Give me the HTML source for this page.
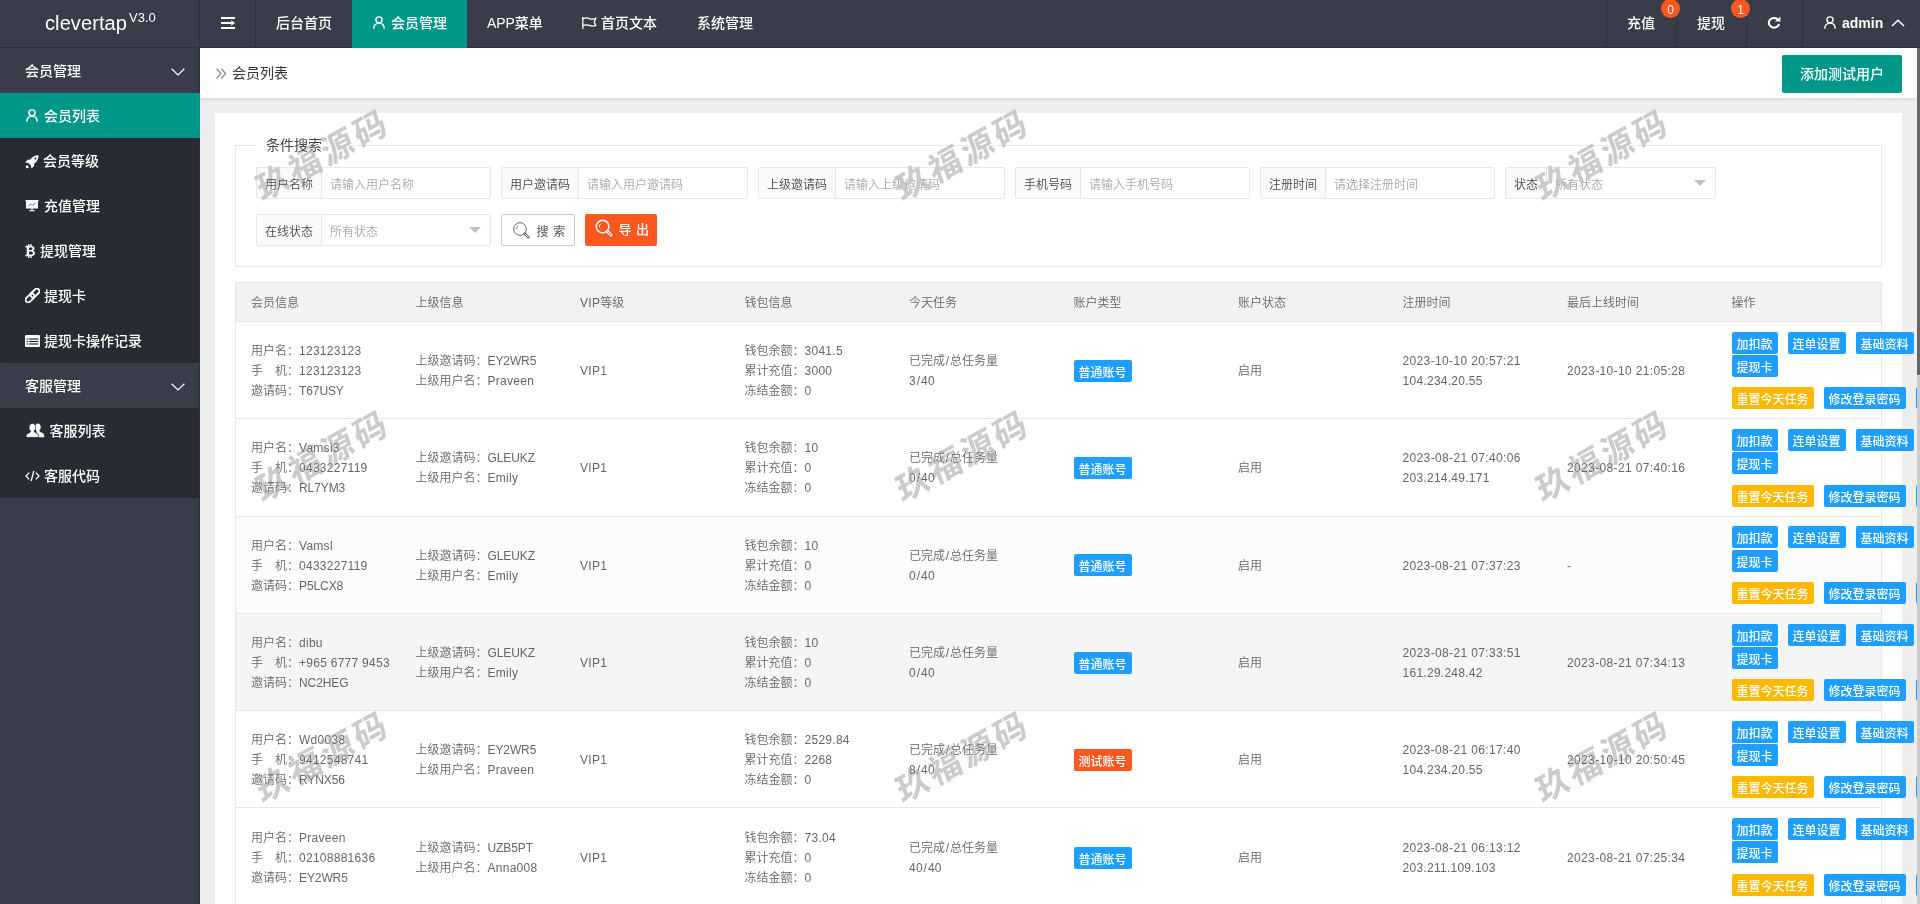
<!DOCTYPE html>
<html lang="zh-CN">
<head>
<meta charset="utf-8">
<title>clevertap</title>
<style>
*{box-sizing:border-box;margin:0;padding:0}
html,body{width:1920px;height:904px;overflow:hidden}
body{position:relative;background:#eee;font-family:"Liberation Sans","Noto Sans CJK SC",sans-serif;font-size:14px;color:#333;line-height:24px}
svg{display:block}
.l{letter-spacing:.27px}.l2{letter-spacing:.36px}.u{letter-spacing:-.1px}.sl{padding:0 .8px}.sl2{padding:0 .7px}
/* header */
.header{position:absolute;left:0;top:0;width:1920px;height:48px;background:#393D49;border-bottom:1px solid #2d303b;z-index:5}
.logo{position:absolute;left:0;top:0;width:200px;height:47px;color:#fff;font-size:20px;line-height:47px;border-right:1px solid #2d303b}
.logo b{position:absolute;left:45px;top:0px;font-weight:400;letter-spacing:.1px}
.logo sup{position:absolute;left:129px;top:-6px;font-size:13px;font-weight:400}
.nav{font-weight:500;position:absolute;top:0;height:47px;color:#fff;font-size:14px;line-height:47px;white-space:nowrap}
.nav .ni{position:absolute;top:0;height:47px}
.vline{position:absolute;top:0;width:1px;height:47px;background:#2f323e}
.badge{position:absolute;top:-1px;width:19px;height:19px;border-radius:50%;background:#FF5722;color:#fff;font-size:12px;line-height:23px;text-align:center}
/* side */
.side{position:absolute;left:0;top:48px;width:200px;height:856px;background:#393D49;border-right:1px solid #2d303b;color:#fff;z-index:4}
.side .it{font-weight:500;position:absolute;left:0;width:199px;height:45px;line-height:47px;font-size:14px;white-space:nowrap}
.side .sub{position:absolute;left:0;width:199px;background:#282B33;border-radius:2px}
.side .it span{position:absolute;top:0}
.side .it svg{position:absolute}
/* crumb */
.crumb{position:absolute;left:200px;top:48px;width:1717px;height:50px;background:#fff;box-shadow:0 1px 4px rgba(0,0,0,.12);z-index:3}
.crumb .t{position:absolute;left:32px;top:0;line-height:50px;font-size:14px;color:#333}
.addbtn{font-weight:500;position:absolute;left:1582px;top:7px;width:120px;height:38px;line-height:38px;background:#009688;color:#fff;font-size:14px;text-align:center;border-radius:2px}
/* card */
.card{position:absolute;left:215px;top:113px;width:1687px;height:900px;background:#fff}
.fs{position:absolute;left:20px;top:32px;width:1647px;height:122px;border:1px solid #e6e6e6}
.fs .lg{position:absolute;left:20px;top:-13px;padding:0 10px;background:#fff;font-size:14px;line-height:24px;color:#444}
.grp{font-weight:350;position:absolute;height:32px;border:1px solid #e6e6e6;border-radius:2px;font-size:12px;line-height:34px;background:#fff;overflow:hidden}
.grp .lb{position:absolute;left:0;top:0;height:30px;background:#fafafa;border-right:1px solid #e6e6e6;color:#4a4a4a;text-align:center}
.grp .ph{position:absolute;top:0;color:#a9a9a9}
.grp .tri{position:absolute;right:9px;top:12px;width:0;height:0;border:6px solid transparent;border-top-color:#c2c2c2}
.sbtn{position:absolute;top:68px;height:32px;border-radius:2px;font-size:12px;line-height:30px}
/* table */
.tb{font-weight:350;position:absolute;left:20px;top:169px;width:1647px;border:1px solid #e6e6e6;font-size:12px;line-height:20px;color:#666}
.th{display:flex;height:39px;background:#f2f2f2;border-bottom:1px solid #e6e6e6}
.th div{width:164.5px;padding:10px 15px 8px;white-space:nowrap}
.tr{display:flex;border-bottom:1px solid #e6e6e6;align-items:center}
.td{width:164.5px;flex:none;padding:2px 15px 0;white-space:nowrap}
.td.tg{display:flex;align-items:center;padding-top:1.5px}
.td.ops{align-self:flex-start;padding-top:9.9px;overflow:visible}
.btn{font-weight:500;display:inline-block;border-radius:2px;color:#fff;white-space:nowrap;text-align:center}
.btn.xs{height:22px;line-height:26px;padding:0 5px;font-size:12px;overflow:hidden}
.blue{background:#1E9FFF}.warm{background:#FFB800}.red{background:#FF5722}
.o1,.o2,.o3{display:flex;white-space:nowrap}
.o1{height:23.3px}.o2{height:22px}.o3{margin-top:10.2px}
.o1 .btn,.o2 .btn,.o3 .btn{flex:none;margin-right:10px}
/* watermark */
.wm{position:absolute;width:200px;height:50px;line-height:50px;text-align:center;font-size:33.5px;font-weight:700;letter-spacing:3.5px;color:#cbcbcb;mix-blend-mode:darken;transform:rotate(-29deg) skewX(-8deg);white-space:nowrap;z-index:9;font-family:"Noto Sans CJK SC",sans-serif}
/* scrollbar */
.sbar{position:absolute;left:1917px;top:48px;width:3px;height:856px;background:#ccc;z-index:10}
.sbar i{position:absolute;left:0;top:0;width:3px;height:327px;background:#666;border-bottom:0}.sbar b{position:absolute;left:0;top:327px;width:3px;height:1px;background:#ddd}
.cover{position:absolute;left:1902px;top:113px;width:15px;height:800px;z-index:2}
</style>
</head>
<body>
<!-- HEADER -->
<div class="header">
  <div class="logo"><b>clevertap</b><sup>V3.0</sup></div>
  <div class="vline" style="left:255px"></div>
  <svg style="position:absolute;left:221px;top:17px" width="14" height="12" viewBox="0 0 14 12"><g fill="#fff"><rect x="0" y="0" width="14" height="2"/><rect x="0" y="5" width="10.4" height="2"/><rect x="0" y="10" width="14" height="2"/><path d="M10.2 3.2 L14 6 L10.2 8.8z"/></g></svg>
  <div class="nav" style="left:0">
    <div class="ni" style="left:276px">后台首页</div>
    <div class="ni" style="left:352px;width:115px;height:48px;background:#009688"></div>
    <svg style="position:absolute;left:373px;top:16px" width="12" height="13" viewBox="0 0 12 14" preserveAspectRatio="none"><g fill="none" stroke="#fff" stroke-width="1.4"><circle cx="6" cy="4" r="3.1"/><path d="M.8 13.6 C.8 9.6 3 7.6 6 7.6 S11.2 9.6 11.2 13.6"/></g></svg>
    <div class="ni" style="left:391px">会员管理</div>
    <div class="ni" style="left:487px"><span style="letter-spacing:-.1px">APP</span>菜单</div>
    <svg style="position:absolute;left:582px;top:17px" width="15" height="12" viewBox="0 0 15 12"><g fill="none" stroke="#fff" stroke-width="1.3"><path d="M.8 0 V12"/><path d="M.8 1.6 C3.5 .6 5.5 .8 7.5 1.6 S11.5 2.4 13.8 1.4 L12.2 4.9 L13.8 8.4 C11.5 9.4 9.5 9.2 7.5 8.4 S3.5 7.6 .8 8.6"/></g></svg>
    <div class="ni" style="left:601px">首页文本</div>
    <div class="ni" style="left:697px">系统管理</div>
  </div>
  <div class="vline" style="left:1606px"></div>
  <div class="vline" style="left:1676px"></div>
  <div class="vline" style="left:1746px"></div>
  <div class="vline" style="left:1802px"></div>
  <div class="nav" style="left:0">
    <div class="ni" style="left:1627px">充值</div>
    <div class="ni" style="left:1697px">提现</div>
    <svg style="position:absolute;left:1767px;top:16px" width="14" height="13" viewBox="0 0 14 14" preserveAspectRatio="none"><path d="M11.2 4.2 A5.2 5.2 0 1 0 12.1 8.6" fill="none" stroke="#fff" stroke-width="2"/><path d="M13.4 0.6 V6 H8z" fill="#fff"/></svg>
    <svg style="position:absolute;left:1824px;top:16px" width="12" height="13" viewBox="0 0 12 14" preserveAspectRatio="none"><g fill="none" stroke="#fff" stroke-width="1.4"><circle cx="6" cy="4" r="3.1"/><path d="M.8 13.6 C.8 9.6 3 7.6 6 7.6 S11.2 9.6 11.2 13.6"/></g></svg>
    <div class="ni" style="left:1842px;font-size:14px;font-weight:700;top:0">admin</div>
    <svg style="position:absolute;left:1891px;top:19px" width="14" height="8" viewBox="0 0 14 8"><path d="M1 7 L7 1.2 L13 7" fill="none" stroke="#fff" stroke-width="1.5"/></svg>
  </div>
  <div class="badge" style="left:1661px">0</div>
  <div class="badge" style="left:1731px">1</div>
</div>

<!-- SIDE -->
<div class="side">
  <div class="it" style="top:0"><span style="left:25px">会员管理</span><svg style="left:171px;top:19.5px" width="14" height="8" viewBox="0 0 14 8"><path d="M.6 .7 L7 6.9 L13.4 .7" fill="none" stroke="#fff" stroke-width="1.25"/></svg></div>
  <div class="sub" style="top:45px;height:270px"></div>
  <div class="it" style="top:45px;background:#009688;width:200px"><svg style="left:26px;top:16px" width="12" height="13" viewBox="0 0 12 14" preserveAspectRatio="none"><g fill="none" stroke="#fff" stroke-width="1.4"><circle cx="6" cy="4" r="3.1"/><path d="M.8 13.6 C.8 9.6 3 7.6 6 7.6 S11.2 9.6 11.2 13.6"/></g></svg><span style="left:44px">会员列表</span></div>
  <div class="it" style="top:90px"><svg style="left:25px;top:17px" width="14" height="14" viewBox="0 0 14 14"><path fill="#fff" d="M13.6.3 C10 .2 7.2 1.8 5.3 4.6 L2.6 4.8 L.3 7.6 L3.3 7.9 L6 10.6 L6.3 13.6 L9.1 11.3 L9.3 8.6 C12.1 6.7 13.7 3.9 13.6.3z M10.4 4.6a1.1 1.1 0 1 1 0-2.2 1.1 1.1 0 0 1 0 2.2z M1.2 10.4 L3.4 10.6 L3.6 12.8 L.8 13.2z"/></svg><span style="left:43px">会员等级</span></div>
  <div class="it" style="top:135px"><svg style="left:25px;top:17px" width="14" height="12" viewBox="0 0 14 12"><path fill="#fff" d="M1 .6 H13 V8.6 H1z M.3 0 H13.7 V1.2 H.3z M6.4 8.6 H7.6 V10.4 H6.4z M4.2 10.2 H9.8 V11.2 H4.2z"/><path d="M3.2 6 L5.6 4.2 L7.4 5.2 L10.6 3" stroke="#393D49" stroke-width=".7" fill="none"/></svg><span style="left:44px">充值管理</span></div>
  <div class="it" style="top:180px"><svg style="left:25px;top:16px" width="10.5" height="14" viewBox="0 0 11 15"><path fill="#fff" d="M3.2 0 H4.6 V2 H5.6 V0 H7 V2.1 C8.9 2.3 10 3.2 10 4.8 C10 5.9 9.4 6.7 8.4 7.1 C9.8 7.5 10.6 8.4 10.6 9.8 C10.6 11.7 9.2 12.7 7 12.9 V15 H5.6 V13 H4.6 V15 H3.2 V13 H.4 V11.3 H1.8 V3.7 H.4 V2 H3.2z M4.2 3.8 V6.4 H6.2 C7.2 6.4 7.8 5.9 7.8 5.1 C7.8 4.3 7.2 3.8 6.2 3.8z M4.2 8.1 V11.2 H6.5 C7.7 11.2 8.3 10.6 8.3 9.6 C8.3 8.7 7.7 8.1 6.5 8.1z"/></svg><span style="left:40px">提现管理</span></div>
  <div class="it" style="top:225px"><svg style="left:24.5px;top:15px" width="15" height="15" viewBox="0 0 15 15"><g fill="none" stroke="#fff" stroke-width="1.9" transform="rotate(-45 7.5 7.5)"><rect x="-1.2" y="4.9" width="10.4" height="5.2" rx="2.6"/><rect x="5.8" y="4.9" width="10.4" height="5.2" rx="2.6"/></g></svg><span style="left:44px">提现卡</span></div>
  <div class="it" style="top:270px"><svg style="left:24.5px;top:17px" width="15" height="12" viewBox="0 0 15 12"><rect x="0" y="0" width="15" height="12" rx="1.2" fill="#fff"/><g fill="#282B33"><rect x="1.6" y="3.4" width="1.6" height="1.2"/><rect x="4.2" y="3.4" width="9.2" height="1.2"/><rect x="1.6" y="5.9" width="1.6" height="1.2"/><rect x="4.2" y="5.9" width="9.2" height="1.2"/><rect x="1.6" y="8.4" width="1.6" height="1.2"/><rect x="4.2" y="8.4" width="9.2" height="1.2"/></g></svg><span style="left:44px">提现卡操作记录</span></div>
  <div class="it" style="top:315px"><span style="left:25px">客服管理</span><svg style="left:171px;top:19.5px" width="14" height="8" viewBox="0 0 14 8"><path d="M.6 .7 L7 6.9 L13.4 .7" fill="none" stroke="#fff" stroke-width="1.25"/></svg></div>
  <div class="sub" style="top:360px;height:90px"></div>
  <div class="it" style="top:360px"><svg style="left:26px;top:15px" width="18.5" height="15" viewBox="0 0 18 14" preserveAspectRatio="none"><g fill="#fff"><path d="M11.5.4 C13.3.4 14.4 1.8 14.4 3.8 C14.4 5.2 13.8 6.4 13 7 C13 7.8 13.4 8.2 14.6 8.7 C16.6 9.5 17.8 10.2 17.8 12 V13.4 H12.2 V12 C12.2 10.4 11.4 9.4 9.8 8.7 C10.2 8.4 10.4 8 10.4 7.4 C9.4 6.6 9 5.4 9 3.8 C9 1.8 9.9.4 11.5.4z"/><path d="M6.2.4 C8.2.4 9.4 2 9.4 4 C9.4 5.6 8.8 6.8 7.9 7.5 C7.9 8.3 8.4 8.8 9.6 9.3 C11.4 10 12.4 10.8 12.4 12.4 V13.4 H.2 V12.4 C.2 10.8 1.2 10 3 9.3 C4.2 8.8 4.6 8.3 4.6 7.5 C3.6 6.8 3 5.6 3 4 C3 2 4.2.4 6.2.4z" stroke="#282B33" stroke-width=".6"/></g></svg><span style="left:49.5px">客服列表</span></div>
  <div class="it" style="top:405px"><svg style="left:25px;top:17px" width="15" height="12" viewBox="0 0 15 12"><g fill="none" stroke="#fff" stroke-width="1.3"><path d="M4.2 2.6 L1 6 L4.2 9.4"/><path d="M10.8 2.6 L14 6 L10.8 9.4"/><path d="M8.8 1 L6.2 11"/></g></svg><span style="left:44px">客服代码</span></div>
</div>

<!-- CRUMB -->
<div class="crumb">
  <svg style="position:absolute;left:16px;top:20px" width="11" height="11" viewBox="0 0 11 11"><g fill="none" stroke="#777" stroke-width="1.15"><path d="M.6.6 L4.8 5.5 L.6 10.4"/><path d="M5.4.6 L9.6 5.5 L5.4 10.4"/></g></svg>
  <div class="t">会员列表</div>
  <div class="addbtn">添加测试用户</div>
</div>

<!-- CARD -->
<div class="card">
  <div class="fs">
    <div class="lg">条件搜索</div>
    <div class="grp" style="left:20px;top:21px;width:235px"><div class="lb" style="width:65px">用户名称</div><div class="ph" style="left:73px">请输入用户名称</div></div>
    <div class="grp" style="left:265px;top:21px;width:247px"><div class="lb" style="width:77px">用户邀请码</div><div class="ph" style="left:85px">请输入用户邀请码</div></div>
    <div class="grp" style="left:522px;top:21px;width:247px"><div class="lb" style="width:77px">上级邀请码</div><div class="ph" style="left:85px">请输入上级邀请码</div></div>
    <div class="grp" style="left:779px;top:21px;width:235px"><div class="lb" style="width:65px">手机号码</div><div class="ph" style="left:73px">请输入手机号码</div></div>
    <div class="grp" style="left:1024px;top:21px;width:235px"><div class="lb" style="width:65px">注册时间</div><div class="ph" style="left:73px">请选择注册时间</div></div>
    <div class="grp" style="left:1269px;top:21px;width:211px"><div class="lb" style="width:41px">状态</div><div class="ph" style="left:49px">所有状态</div><i class="tri"></i></div>
    <div class="grp" style="left:20px;top:68px;width:235px"><div class="lb" style="width:65px">在线状态</div><div class="ph" style="left:73px">所有状态</div><i class="tri"></i></div>
    <div class="sbtn" style="left:265px;width:74px;border:1px solid #C9C9C9;background:#fff;color:#555"><svg style="position:absolute;left:11px;top:7px" width="17" height="17" viewBox="0 0 17 17"><g fill="none" stroke="#666" stroke-width="1"><circle cx="7" cy="7" r="6.3"/><path d="M3.6 7.4 A3.6 3.6 0 0 1 5.4 3.8" stroke-width=".8"/><path d="M11.6 11.6 L15.4 15.4" stroke-width="2.6" stroke-linecap="round"/><path d="M11.9 11.9 L15.2 15.2" stroke="#fff" stroke-width="1" stroke-linecap="round"/></g></svg><span style="position:absolute;left:34.5px;top:2px;word-spacing:1.5px">搜 索</span></div>
    <div class="sbtn" style="left:349px;width:72px;background:#FF5722;color:#fff;line-height:32px;font-size:13px"><svg style="position:absolute;left:10px;top:5px" width="18" height="18" viewBox="0 0 18 18"><g fill="none" stroke="#fff" stroke-width="1.5"><circle cx="7.6" cy="7.6" r="6.3"/><path d="M4.4 8 A3.5 3.5 0 0 1 6 4.6" stroke-width="1"/><path d="M12.4 12.4 L16 16" stroke-width="3" stroke-linecap="round"/><path d="M12.8 12.8 L15.8 15.8" stroke="#FF5722" stroke-width=".9" stroke-linecap="round"/></g></svg><span style="position:absolute;left:33.5px;top:0;font-weight:500;word-spacing:1px">导 出</span></div>
  </div>
  <div class="tb">
    <div class="th"><div>会员信息</div><div>上级信息</div><div><span class="l">VIP</span>等级</div><div>钱包信息</div><div>今天任务</div><div>账户类型</div><div>账户状态</div><div>注册时间</div><div>最后上线时间</div><div>操作</div></div>
<div class="tr" style="height:97.25px;background:#fff">
<div class="td">用户名：<span class="l">123123123</span><br>手&#12288;机：<span class="l">123123123</span><br>邀请码：<span class="u">T67USY</span></div>
<div class="td">上级邀请码：<span class="u">EY2WR5</span><br>上级用户名：<span class="l">Praveen</span></div>
<div class="td"><span class="l">VIP1</span></div>
<div class="td">钱包余额：<span class="l">3041.5</span><br>累计充值：<span class="l">3000</span><br>冻结金额：<span class="l">0</span></div>
<div class="td">已完成<span class="sl">/</span>总任务量<br><span class="l">3<span class="sl2">/</span>40</span></div>
<div class="td tg"><span class="btn xs blue">普通账号</span></div>
<div class="td">启用</div>
<div class="td"><span class="l2">2023-10-10 20:57:21</span><br><span class="l">104.234.20.55</span></div>
<div class="td"><span class="l2">2023-10-10 21:05:28</span></div>
<div class="td ops"><div class="o1"><span class="btn xs blue">加扣款</span><span class="btn xs blue">连单设置</span><span class="btn xs blue">基础资料</span></div><div class="o2"><span class="btn xs blue">提现卡</span></div><div class="o3"><span class="btn xs warm">重置今天任务</span><span class="btn xs blue">修改登录密码</span><span class="btn xs blue">修改提现密码</span></div></div>
</div>
<div class="tr" style="height:97.25px;background:#fff">
<div class="td">用户名：<span class="l">Vamsi3</span><br>手&#12288;机：<span class="l">0433227119</span><br>邀请码：<span class="u">RL7YM3</span></div>
<div class="td">上级邀请码：<span class="u">GLEUKZ</span><br>上级用户名：<span class="l">Emily</span></div>
<div class="td"><span class="l">VIP1</span></div>
<div class="td">钱包余额：<span class="l">10</span><br>累计充值：<span class="l">0</span><br>冻结金额：<span class="l">0</span></div>
<div class="td">已完成<span class="sl">/</span>总任务量<br><span class="l">0<span class="sl2">/</span>40</span></div>
<div class="td tg"><span class="btn xs blue">普通账号</span></div>
<div class="td">启用</div>
<div class="td"><span class="l2">2023-08-21 07:40:06</span><br><span class="l">203.214.49.171</span></div>
<div class="td"><span class="l2">2023-08-21 07:40:16</span></div>
<div class="td ops"><div class="o1"><span class="btn xs blue">加扣款</span><span class="btn xs blue">连单设置</span><span class="btn xs blue">基础资料</span></div><div class="o2"><span class="btn xs blue">提现卡</span></div><div class="o3"><span class="btn xs warm">重置今天任务</span><span class="btn xs blue">修改登录密码</span><span class="btn xs blue">修改提现密码</span></div></div>
</div>
<div class="tr" style="height:97.25px;background:#fcfcfc">
<div class="td">用户名：<span class="l">Vamsl</span><br>手&#12288;机：<span class="l">0433227119</span><br>邀请码：<span class="u">P5LCX8</span></div>
<div class="td">上级邀请码：<span class="u">GLEUKZ</span><br>上级用户名：<span class="l">Emily</span></div>
<div class="td"><span class="l">VIP1</span></div>
<div class="td">钱包余额：<span class="l">10</span><br>累计充值：<span class="l">0</span><br>冻结金额：<span class="l">0</span></div>
<div class="td">已完成<span class="sl">/</span>总任务量<br><span class="l">0<span class="sl2">/</span>40</span></div>
<div class="td tg"><span class="btn xs blue">普通账号</span></div>
<div class="td">启用</div>
<div class="td"><span class="l2">2023-08-21 07:37:23</span></div>
<div class="td"><span class="l2">-</span></div>
<div class="td ops"><div class="o1"><span class="btn xs blue">加扣款</span><span class="btn xs blue">连单设置</span><span class="btn xs blue">基础资料</span></div><div class="o2"><span class="btn xs blue">提现卡</span></div><div class="o3"><span class="btn xs warm">重置今天任务</span><span class="btn xs blue">修改登录密码</span><span class="btn xs blue">修改提现密码</span></div></div>
</div>
<div class="tr" style="height:97.25px;background:#f5f5f5">
<div class="td">用户名：<span class="l">dibu</span><br>手&#12288;机：<span class="l">+965 6777 9453</span><br>邀请码：<span class="u">NC2HEG</span></div>
<div class="td">上级邀请码：<span class="u">GLEUKZ</span><br>上级用户名：<span class="l">Emily</span></div>
<div class="td"><span class="l">VIP1</span></div>
<div class="td">钱包余额：<span class="l">10</span><br>累计充值：<span class="l">0</span><br>冻结金额：<span class="l">0</span></div>
<div class="td">已完成<span class="sl">/</span>总任务量<br><span class="l">0<span class="sl2">/</span>40</span></div>
<div class="td tg"><span class="btn xs blue">普通账号</span></div>
<div class="td">启用</div>
<div class="td"><span class="l2">2023-08-21 07:33:51</span><br><span class="l">161.29.248.42</span></div>
<div class="td"><span class="l2">2023-08-21 07:34:13</span></div>
<div class="td ops"><div class="o1"><span class="btn xs blue">加扣款</span><span class="btn xs blue">连单设置</span><span class="btn xs blue">基础资料</span></div><div class="o2"><span class="btn xs blue">提现卡</span></div><div class="o3"><span class="btn xs warm">重置今天任务</span><span class="btn xs blue">修改登录密码</span><span class="btn xs blue">修改提现密码</span></div></div>
</div>
<div class="tr" style="height:97.25px;background:#fff">
<div class="td">用户名：<span class="l">Wd0038</span><br>手&#12288;机：<span class="l">9412548741</span><br>邀请码：<span class="u">RYNX56</span></div>
<div class="td">上级邀请码：<span class="u">EY2WR5</span><br>上级用户名：<span class="l">Praveen</span></div>
<div class="td"><span class="l">VIP1</span></div>
<div class="td">钱包余额：<span class="l">2529.84</span><br>累计充值：<span class="l">2268</span><br>冻结金额：<span class="l">0</span></div>
<div class="td">已完成<span class="sl">/</span>总任务量<br><span class="l">8<span class="sl2">/</span>40</span></div>
<div class="td tg"><span class="btn xs red">测试账号</span></div>
<div class="td">启用</div>
<div class="td"><span class="l2">2023-08-21 06:17:40</span><br><span class="l">104.234.20.55</span></div>
<div class="td"><span class="l2">2023-10-10 20:50:45</span></div>
<div class="td ops"><div class="o1"><span class="btn xs blue">加扣款</span><span class="btn xs blue">连单设置</span><span class="btn xs blue">基础资料</span></div><div class="o2"><span class="btn xs blue">提现卡</span></div><div class="o3"><span class="btn xs warm">重置今天任务</span><span class="btn xs blue">修改登录密码</span><span class="btn xs blue">修改提现密码</span></div></div>
</div>
<div class="tr" style="height:98.25px;background:#fff">
<div class="td">用户名：<span class="l">Praveen</span><br>手&#12288;机：<span class="l">02108881636</span><br>邀请码：<span class="u">EY2WR5</span></div>
<div class="td">上级邀请码：<span class="u">UZB5PT</span><br>上级用户名：<span class="l">Anna008</span></div>
<div class="td"><span class="l">VIP1</span></div>
<div class="td">钱包余额：<span class="l">73.04</span><br>累计充值：<span class="l">0</span><br>冻结金额：<span class="l">0</span></div>
<div class="td">已完成<span class="sl">/</span>总任务量<br><span class="l">40<span class="sl2">/</span>40</span></div>
<div class="td tg"><span class="btn xs blue">普通账号</span></div>
<div class="td">启用</div>
<div class="td"><span class="l2">2023-08-21 06:13:12</span><br><span class="l">203.211.109.103</span></div>
<div class="td"><span class="l2">2023-08-21 07:25:34</span></div>
<div class="td ops"><div class="o1"><span class="btn xs blue">加扣款</span><span class="btn xs blue">连单设置</span><span class="btn xs blue">基础资料</span></div><div class="o2"><span class="btn xs blue">提现卡</span></div><div class="o3"><span class="btn xs warm">重置今天任务</span><span class="btn xs blue">修改登录密码</span><span class="btn xs blue">修改提现密码</span></div></div>
</div>
<div class="tr" style="height:97.25px;background:#fff">
<div class="td">用户名：<span class="l">Anna008</span><br>手&#12288;机：<span class="l">02108881637</span><br>邀请码：<span class="u">UZB5PT</span></div>
<div class="td">上级邀请码：<span class="u">UZB5PT</span><br>上级用户名：<span class="l">Anna008</span></div>
<div class="td"><span class="l">VIP1</span></div>
<div class="td">钱包余额：<span class="l">0</span><br>累计充值：<span class="l">0</span><br>冻结金额：<span class="l">0</span></div>
<div class="td">已完成<span class="sl">/</span>总任务量<br><span class="l">0<span class="sl2">/</span>40</span></div>
<div class="td tg"><span class="btn xs blue">普通账号</span></div>
<div class="td">启用</div>
<div class="td"><span class="l2">2023-08-21 06:10:02</span><br><span class="l">203.211.109.103</span></div>
<div class="td"><span class="l2">2023-08-21 06:25:34</span></div>
<div class="td ops"><div class="o1"><span class="btn xs blue">加扣款</span><span class="btn xs blue">连单设置</span><span class="btn xs blue">基础资料</span></div><div class="o2"><span class="btn xs blue">提现卡</span></div><div class="o3"><span class="btn xs warm">重置今天任务</span><span class="btn xs blue">修改登录密码</span><span class="btn xs blue">修改提现密码</span></div></div>
</div>
  </div>
</div>


<!-- watermarks -->
<div class="wm" style="left:222px;top:128px">玖福源码</div>
<div class="wm" style="left:862px;top:128px">玖福源码</div>
<div class="wm" style="left:1502px;top:128px">玖福源码</div>
<div class="wm" style="left:222px;top:429px">玖福源码</div>
<div class="wm" style="left:862px;top:429px">玖福源码</div>
<div class="wm" style="left:1502px;top:429px">玖福源码</div>
<div class="wm" style="left:222px;top:730px">玖福源码</div>
<div class="wm" style="left:862px;top:730px">玖福源码</div>
<div class="wm" style="left:1502px;top:730px">玖福源码</div>

<div class="sbar"><i></i><b></b></div>
</body>
</html>
